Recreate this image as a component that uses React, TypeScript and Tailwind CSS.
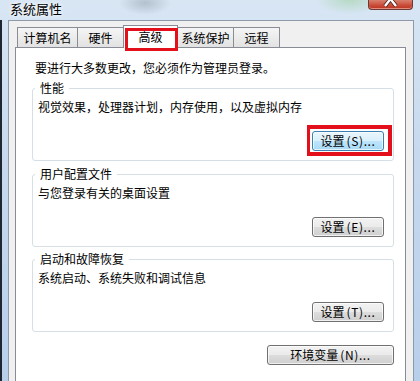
import type { ReactNode } from 'react'

const tabs = [
  { label: '计算机名', cls: 'w-[61px]' },
  { label: '硬件', cls: 'w-[47px] -ml-px' },
  { label: '高级', cls: 'w-[55px] -ml-px', active: true },
  { label: '系统保护', cls: 'w-[57px] -ml-px' },
  { label: '远程', cls: 'w-[47px] -ml-px' },
]

function WinButton({ label, hotkey, width, primary, marked }: { label: string; hotkey: string; width: string; primary?: boolean; marked?: boolean }) {
  const skin = primary
    ? 'border-[#3c7fb1] bg-[linear-gradient(#eaf6fd_0%,#d9f0fc_50%,#bee6fd_50%,#a7d9f5_100%)]'
    : 'border-[#707070] bg-[linear-gradient(#f2f2f2_0%,#ebebeb_50%,#dddddd_50%,#cfcfcf_100%)]'
  return (
    <div className={`relative ${width} h-[20px]`}>
      <button
        type="button"
        className={`w-full h-full flex items-center justify-center border rounded-[3px] shadow-[inset_0_0_0_1px_rgba(255,255,255,0.7)] leading-[16px] ${skin}`}
      >
        {label}
        <span className="ml-[2px] tracking-[0.6px]">({hotkey})...</span>
      </button>
      {marked && (
        <div className="absolute -left-[5px] -top-[6px] w-[85px] h-[31px] border-[4px] border-l-[3px] border-[#e3101b]" />
      )}
    </div>
  )
}

function Group({ title, text, button }: { title: string; text: string; button: ReactNode }) {
  return (
    <fieldset className="border border-[#d5dfe5] rounded-[3px] pl-[2px] pr-[9px] pb-[9px]">
      <legend className="px-[5px] leading-[16px]">{title}</legend>
      <div className="pl-[3px] pt-[3px] leading-[16px]">{text}</div>
      <div className="flex justify-end mt-[16px]">{button}</div>
    </fieldset>
  )
}

export default function App() {
  return (
    <div className="w-[420px] h-[381px] overflow-hidden flex bg-[linear-gradient(180deg,#d8e6f4_0%,#c6d9ee_40%,#b8cfeb_100%)] font-['Noto_Sans_CJK_SC','Noto_Sans',sans-serif] text-[12px] text-black">
      <div className="w-[2px] mt-[20px] bg-[#1e2631]" />
      <div className="flex-1 flex flex-col">
        {/* title bar */}
        <div className="h-[20px] flex items-start bg-[radial-gradient(ellipse_26px_12px_at_143px_3px,rgba(110,120,135,0.35),transparent),radial-gradient(ellipse_34px_14px_at_348px_0px,rgba(150,205,150,0.5),transparent)]">
          <span className="pl-[8px] pt-[1px] text-[13px] leading-[16px] [text-shadow:0_0_6px_#ffffff,0_0_3px_#ffffff]">系统属性</span>
          <div className="ml-auto mr-[7px] w-[45px] h-[10px] rounded-b-[4px] border border-t-0 border-[#6b3a32] bg-[linear-gradient(#d9806f,#c94b37_60%,#b8321f)] shadow-[inset_0_-1px_0_rgba(255,200,190,0.6)]">
            <svg width="43" height="9" viewBox="0 0 43 9" className="block">
              <path d="M16 6 L21.5 -1 L27 6" fill="none" stroke="#4a2018" strokeWidth="4" />
              <path d="M16 6 L21.5 -1 L27 6" fill="none" stroke="#ffffff" strokeWidth="2.4" />
            </svg>
          </div>
        </div>
        <div className="flex flex-1 min-h-0">
          <div className="w-[6px]" />
          {/* dialog face */}
          <div className="flex-1 flex flex-col border border-b-0 border-[#8e9aa9] bg-[#f0f0f0] pl-[6px] pr-[7px] pt-[4px]">
            <div className="flex items-end pl-[2px] h-[22px]">
              {tabs.map((t) =>
                t.active ? (
                  <div
                    key={t.label}
                    className={`${t.cls} relative z-10 h-[23px] mb-[-1px] border border-b-0 border-[#898c95] bg-white flex items-center justify-center leading-[16px]`}
                  >
                    {t.label}
                    <div className="absolute left-[1px] top-[2px] w-[53px] h-[23px] border-[3px] border-[#e3101b]" />
                  </div>
                ) : (
                  <div
                    key={t.label}
                    className={`${t.cls} h-[20px] border border-b-0 border-[#898c95] bg-[linear-gradient(#f5f5f5,#e2e2e2)] flex items-center justify-center leading-[16px]`}
                  >
                    {t.label}
                  </div>
                )
              )}
            </div>
            <div className="flex-1 border border-b-0 border-[#898c95] bg-white pl-[16px] pr-[11px] pt-[12px]">
              <div className="ml-[3px] leading-[16px]">要进行大多数更改，您必须作为管理员登录。</div>
              <div className="mt-[4px]">
                <Group
                  title="性能"
                  text="视觉效果，处理器计划，内存使用，以及虚拟内存"
                  button={<WinButton width="w-[72px]" label="设置" hotkey="S" primary marked />}
                />
              </div>
              <div className="mt-[5px]">
                <Group
                  title="用户配置文件"
                  text="与您登录有关的桌面设置"
                  button={<WinButton width="w-[72px]" label="设置" hotkey="E" />}
                />
              </div>
              <div className="mt-[4px]">
                <Group
                  title="启动和故障恢复"
                  text="系统启动、系统失败和调试信息"
                  button={<WinButton width="w-[72px]" label="设置" hotkey="T" />}
                />
              </div>
              <div className="flex justify-end mt-[13px]">
                <WinButton width="w-[127px]" label="环境变量" hotkey="N" />
              </div>
            </div>
          </div>
          <div className="w-[6px]" />
        </div>
      </div>
    </div>
  )
}
